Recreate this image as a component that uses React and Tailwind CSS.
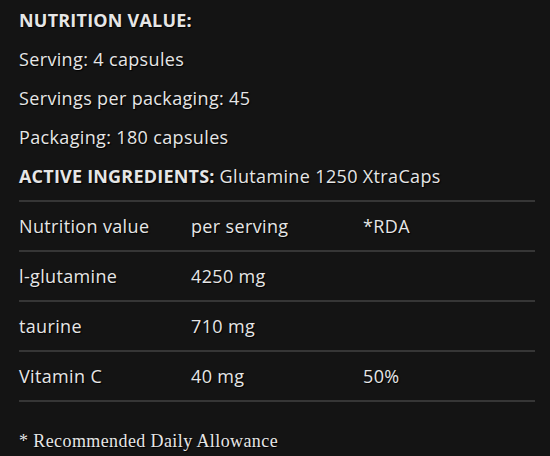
import React from 'react';

const rows = [
  ['Nutrition value', 'per serving', '*RDA'],
  ['l-glutamine', '4250 mg', ''],
  ['taurine', '710 mg', ''],
  ['Vitamin C', '40 mg', '50%'],
];

const App = () => {
  return (
    <div className="min-h-[456px] w-[550px] bg-[#141414] px-[19px] pt-[7px] text-[18px] tracking-[0.35px] text-[#e6e6e6] font-['Open_Sans',sans-serif] [text-shadow:1px_1px_1px_#000]">
      <p className="h-[39px] leading-[26px] font-bold tracking-[0.2px]">NUTRITION VALUE:</p>
      <p className="h-[39px] leading-[26px]">Serving: 4 capsules</p>
      <p className="h-[39px] leading-[26px]">Servings per packaging: 45</p>
      <p className="h-[39px] leading-[26px]">Packaging: 180 capsules</p>
      <p className="h-[37px] leading-[26px]">
        <span className="font-bold tracking-[0.2px]">ACTIVE INGREDIENTS:</span> Glutamine 1250 XtraCaps
      </p>
      <table className="w-[516px] table-fixed border-collapse">
        <tbody>
          {rows.map((r) => (
            <tr key={r[0]} className="h-[50px] border-y-2 border-[#363636]">
              {r.map((c, i) => (
                <td key={i} className="align-middle">{c}</td>
              ))}
            </tr>
          ))}
        </tbody>
      </table>
      <p className="mt-[26px] text-[18px] tracking-[0.4px] font-['Liberation_Serif',serif]">* Recommended Daily Allowance</p>
    </div>
  );
};

export default App;
